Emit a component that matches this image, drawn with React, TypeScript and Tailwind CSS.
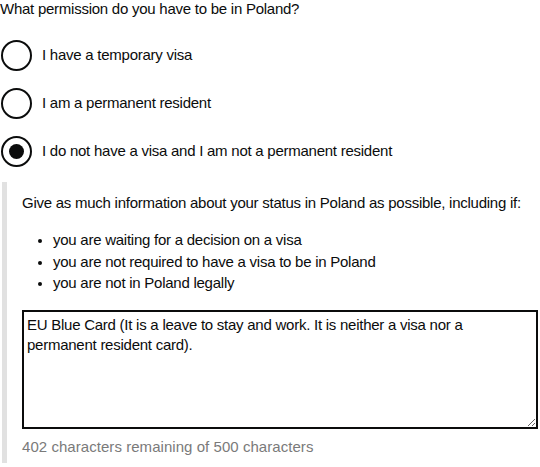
import { useState } from "react";

const options = [
  { id: "temporary", label: "I have a temporary visa" },
  { id: "permanent", label: "I am a permanent resident" },
  { id: "none", label: "I do not have a visa and I am not a permanent resident" },
];

const hints = [
  "you are waiting for a decision on a visa",
  "you are not required to have a visa to be in Poland",
  "you are not in Poland legally",
];

export default function App() {
  const [choice, setChoice] = useState("none");
  const [text, setText] = useState(
    "EU Blue Card (It is a leave to stay and work. It is neither a visa nor a permanent resident card)."
  );

  return (
    <div className="w-[540px] h-[467px] bg-white text-[#0b0c0c] font-['Liberation_Sans',Arial,sans-serif] text-[15px] tracking-[-0.25px] overflow-hidden">
      <p className="leading-[20px] -mt-[1px]">What permission do you have to be in Poland?</p>

      <div className="flex flex-col gap-[8px] mt-[16px]">
        {options.map((o) => (
          <label key={o.id} className="flex items-center h-[40px] cursor-pointer">
            <input
              type="radio"
              name="permission"
              className="sr-only"
              checked={choice === o.id}
              onChange={() => setChoice(o.id)}
            />
            <span className="flex items-center justify-center w-[31px] h-[31px] ml-[1px] rounded-full border-2 border-[#0b0c0c] shrink-0">
              {choice === o.id && <span className="w-[15px] h-[15px] rounded-full bg-[#0b0c0c]" />}
            </span>
            <span className="ml-[10px]">{o.label}</span>
          </label>
        ))}
      </div>

      {/* conditional reveal */}
      <div className="mt-[11px] ml-[2px] border-l-[5px] border-[#e1e1e1] pl-[15px] pt-[11px] pb-[6px]">
        <p className="leading-[20px]">Give as much information about your status in Poland as possible, including if:</p>
        <ul className="mt-[16px] ml-[20px] leading-[21.5px] list-disc pl-[11px] marker:text-[13px]">
          {hints.map((h) => (
            <li key={h}>{h}</li>
          ))}
        </ul>
        <textarea
          value={text}
          onChange={(e) => setText(e.target.value)}
          className="block mt-[16px] w-[516px] h-[119px] border-2 border-[#0b0c0c] px-[3px] py-[3px] leading-[20px] text-[15px] tracking-[-0.25px] outline-none resize-y"
        />
        <p className="mt-[8px] leading-[20px] text-[#7a7a7a] tracking-[0.05px]">
          {500 - text.length} characters remaining of 500 characters
        </p>
      </div>
    </div>
  );
}
